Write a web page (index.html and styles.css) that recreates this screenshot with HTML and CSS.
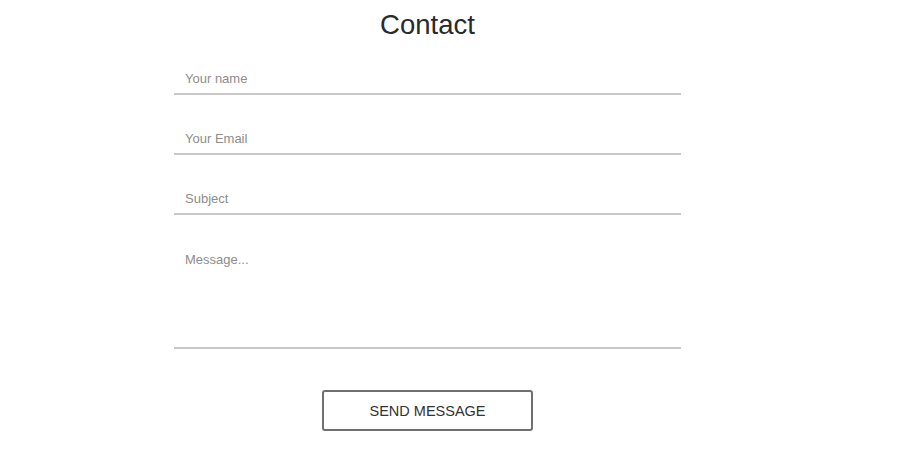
FILE: index.html
```html
<!DOCTYPE html>
<html>
<head>
<meta charset="utf-8">
<link rel="stylesheet" href="styles.css">
</head>
<body>
<main class="page">
  <h1 class="title">Contact</h1>
  <form class="contact-form">
    <input class="field" type="text" placeholder="Your name">
    <input class="field" type="email" placeholder="Your Email">
    <input class="field" type="text" placeholder="Subject">
    <textarea class="field message" placeholder="Message..."></textarea>
    <button class="send" type="button">SEND MESSAGE</button>
  </form>
</main>
</body>
</html>
```
FILE: styles.css
```css
html, body {
  margin: 0;
  padding: 0;
  background: #fff;
}
body {
  font-family: "Liberation Sans", Arial, sans-serif;
  color: #333;
}
.page {
  width: 855px;
  display: flex;
  flex-direction: column;
  align-items: center;
}
.title {
  margin: 8px 0 0;
  font-size: 27.5px;
  font-weight: normal;
  line-height: 34px;
  color: #2a2a2a;
}
.contact-form {
  width: 507px;
  margin-top: 21px;
  display: flex;
  flex-direction: column;
}
.field {
  box-sizing: border-box;
  height: 32px;
  margin: 0 0 28px;
  padding: 0 11px;
  border: none;
  border-bottom: 2px solid #c8c8c8;
  font-family: "Liberation Sans", Arial, sans-serif;
  font-size: 13px;
  color: #333;
  outline: none;
  background: transparent;
}
.field::placeholder {
  color: #8d8d8d;
}
.message {
  height: 106px;
  padding-top: 9px;
  resize: none;
  margin-bottom: 41px;
}
.send {
  align-self: center;
  width: 211px;
  height: 41px;
  border: 2px solid #707070;
  border-radius: 3px;
  background: #fff;
  font-family: "Liberation Sans", Arial, sans-serif;
  font-size: 14.5px;
  color: #333;
  cursor: pointer;
}
```
